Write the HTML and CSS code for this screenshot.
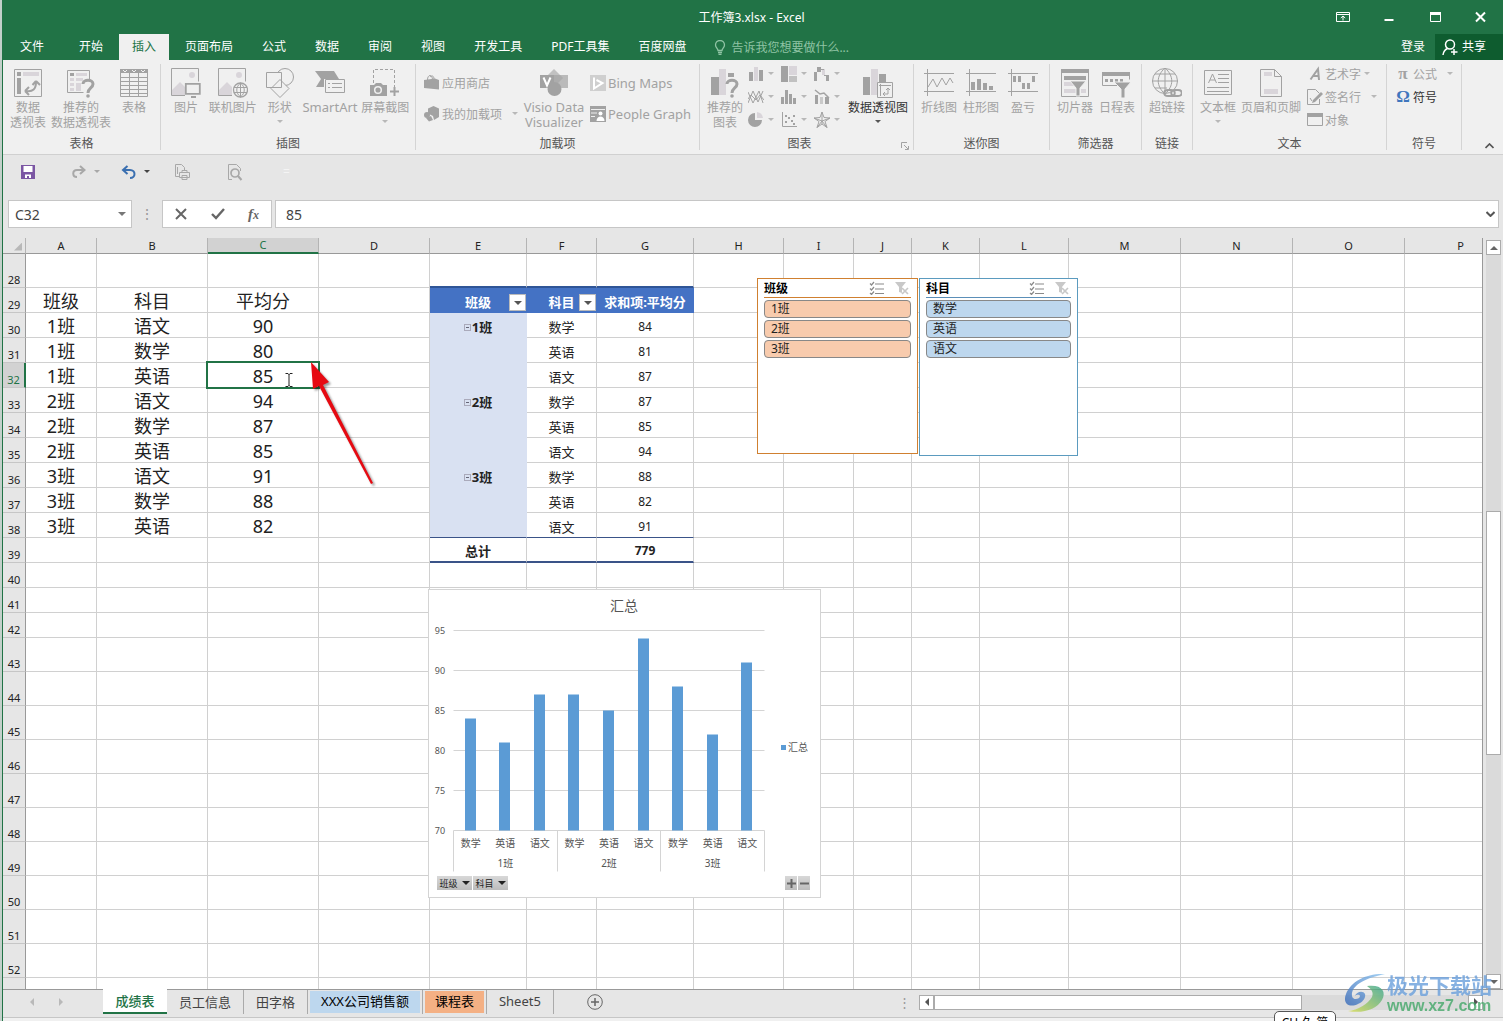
FILE: index.html
```
<!DOCTYPE html>
<html lang="zh-Hans">
<head>
  <meta charset="UTF-8">
  <meta name="viewport" content="width=device-width, initial-scale=1.0">
  <title>工作簿3.xlsx - Excel</title>
  <link rel="stylesheet" href="styles.css">
</head>
<body>
<div class="app">
  <header class="titlebar">
    <h1>工作簿3.xlsx - Excel</h1>
    <div class="window-buttons">
      <button aria-label="功能区显示选项"><svg width="14" height="12" viewBox="0 0 14 12"><path d="M.5 1.5h13v9H.5zM.5 3.5h13M7 9.500V5M4.800 7L7 5l2.200 2" fill="none" stroke="currentColor"/></svg></button>
      <button aria-label="最小化"><svg width="10" height="12" viewBox="0 0 10 12"><path d="M.5 8h9v2h-9z" fill="currentColor"/></svg></button>
      <button aria-label="最大化"><svg width="11" height="12" viewBox="0 0 11 12"><path d="M.5 1.500h10v9H.5z" fill="none" stroke="currentColor"/><path d="M0 1h11v3H0z" fill="currentColor"/></svg></button>
      <button aria-label="关闭"><svg width="11" height="12" viewBox="0 0 11 12"><path d="M1 1.500l9 9M10 1.500l-9 9" fill="none" stroke="currentColor" stroke-width="2"/></svg></button>
    </div>
  </header>

  <nav class="tabs">
    <button class="file">文件</button>
    <button>开始</button>
    <button class="active">插入</button>
    <button>页面布局</button>
    <button>公式</button>
    <button>数据</button>
    <button>审阅</button>
    <button>视图</button>
    <button>开发工具</button>
    <button>PDF工具集</button>
    <button>百度网盘</button>
    <label class="tell-me">
      <svg width="12" height="15" viewBox="0 0 12 15"><path d="M4 10.500C4 8.500 1.500 7.500 1.500 5a4.500 4.500 0 0 1 9 0C10.500 7.500 8 8.500 8 10.500zM4 12.500h4M4.500 14.300h3" fill="none" stroke="currentColor" stroke-width="1.300"/></svg>
      <input type="text" placeholder="告诉我您想要做什么...">
    </label>
    <button class="login">登录</button>
    <button class="share"><svg width="16" height="17" viewBox="0 0 16 17"><circle cx="8" cy="5.500" r="4.500" fill="none" stroke="currentColor" stroke-width="1.500"/><path d="M1 16c.5-4 2-5.500 4.500-6.500M12 10v6M9 13h6.500" fill="none" stroke="currentColor" stroke-width="1.500"/></svg>共享</button>
  </nav>

  <div class="ribbon">
    <section class="group g-table">
      <div class="items">
        <button class="big"><svg width="28" height="28" viewBox="0 0 28 28"><path class="ln" d="M.5.5h27v27H.5z"/><path class="fl" d="M3 3h4v4H3zM3 9h4v16H3z"/><path class="lt" d="M9 3h16v4H9z"/><path class="ln" stroke-width="2" d="M12 22c7 1 10-2 10-9M22 12l-3.500 4M22 12l4 4M11 22l4-4M11 22l4 4"/></svg><span>数据<br>透视表</span></button>
        <button class="big"><svg width="28" height="28" viewBox="0 0 28 28"><path class="ln" d="M22.500 10V1.500H.5v22h16"/><path class="fl" d="M3 4h4v3H3z"/><path class="lt" d="M9 4h11v3H9zM3 9h4v3H3zM3 14h4v3H3zM3 19h4v3H3zM9 9h7v3H9zM9 14h5v8H9z"/><path d="M16 15c0-5 10-5 10 0 0 4-5 4-5 9" fill="none" stroke="currentColor" stroke-width="3"/><circle cx="21" cy="27" r="1.800" class="fl"/></svg><span>推荐的<br>数据透视表</span></button>
        <button class="big"><svg width="28" height="28" viewBox="0 0 28 28"><path class="ln" d="M.5.5h27v27H.5zM9.500 4v24M18.500 4v24M0 8.500h28M0 12.500h28M0 16.500h28M0 20.500h28M0 24.500h28"/><path class="fl" d="M0 0h28v4H0z"/><path d="M3 1l2 2 2-2M12 1l2 2 2-2M21 1l2 2 2-2" stroke="#f0f0f0" fill="none"/></svg><span>表格</span></button>
      </div>
      <h2>表格</h2>
    </section>

    <section class="group g-pic">
      <div class="items">
        <button class="big"><svg width="30" height="30" viewBox="0 0 30 30"><path class="ln" d="M14 27.500H.5V.5h27v13"/><circle class="lt" cx="21" cy="7" r="3"/><path class="lt" d="M1 22l8-8 5 5v8H1z"/><path d="M14.800 15.800h14v10h-14zM20 29h5" fill="#f0f0f0" stroke="currentColor" stroke-width="1.800"/></svg><span>图片</span></button>
        <button class="big"><svg width="30" height="30" viewBox="0 0 30 30"><path class="ln" d="M14 27.500H.5V.5h27v13"/><circle class="lt" cx="21" cy="7" r="3"/><path class="lt" d="M1 22l8-8 5 5v8H1z"/><circle cx="22.500" cy="22" r="7" fill="#f0f0f0" stroke="currentColor" stroke-width="1.300"/><path class="ln" d="M22.500 15v14M16 19.500h13M16 24.500h13M22.500 15c-5 4-5 10 0 14M22.500 15c5 4 5 10 0 14"/></svg><span>联机图片</span></button>
        <button class="big caret-below"><svg width="30" height="30" viewBox="0 0 30 30"><circle class="ln" cx="20" cy="9" r="8.500"/><path d="M1.500 4.500h15v15h-15zM15 11.500l9 9-9 9-9-9z" fill="#f0f0f0" stroke="currentColor"/></svg><span>形状</span></button>
        <button class="big"><svg width="30" height="28" viewBox="0 0 30 28"><path class="fl" d="M0 2h19l5 8H9v8H1l5-8z"/><path d="M10.500 10.500h19v13h-19z" fill="#f0f0f0" stroke="currentColor"/><path class="ln" d="M13 14.500h2M17 14.500h10M13 18.500h2M17 18.500h10"/></svg><span class="latin">SmartArt</span></button>
        <button class="big caret-below"><svg width="30" height="30" viewBox="0 0 30 30"><path class="ln" stroke-dasharray="3 2" d="M3.500 15V1.500h21V19"/><path class="fl" d="M0 17h4l2-2h5l2 2h4v11H0z"/><circle cx="8" cy="22" r="3.300" fill="none" stroke="#f0f0f0" stroke-width="1.500"/><path d="M20 23.500h9M24.500 19v9" stroke="currentColor" stroke-width="2"/></svg><span>屏幕截图</span></button>
      </div>
      <h2>插图</h2>
    </section>

    <section class="group g-addin">
      <div class="items">
        <div class="stack two">
          <button class="small"><svg width="16" height="16" viewBox="0 0 16 16"><path class="fl" d="M0 5l11-1.500L15 5v9.500L0 13z"/><path class="ln" d="M3.500 5c0-6 5-6 5 0M6 2c2-2 4-1 4 2"/></svg>应用商店</button>
          <button class="small"><svg width="16" height="16" viewBox="0 0 16 16"><path class="fl" d="M9.500 0L15 2.500V11l-5 3-1-4-5-2.500V2.500z"/><circle class="fl" cx="3" cy="9" r="3"/><path class="fl" d="M2 12l5-2 2 4-4 1.500z"/></svg>我的加载项<i class="caret gap"></i></button>
        </div>
        <button class="big latin"><svg width="28" height="28" viewBox="0 0 28 28"><path class="fl" opacity=".6" d="M14 0l9 9-9 9-9-9z"/><circle class="fl" cx="14.500" cy="20" r="7"/><path class="fl" opacity=".7" d="M14 6h14v13H14z"/><path class="fl" d="M0 6h14v13H0z"/><path d="M3.500 8.500l3.500 8 3.500-8" fill="none" stroke="#fff" stroke-width="2"/></svg><span>Visio Data<br>Visualizer</span></button>
        <div class="stack two latin">
          <button class="small"><svg width="16" height="16" viewBox="0 0 16 16"><path fill="#cfcfcf" d="M0 0h16v16H0z"/><path d="M4 2.500v11L12.500 8 6.500 5" fill="none" stroke="#fff" stroke-width="2"/></svg>Bing Maps</button>
          <button class="small"><svg width="16" height="16" viewBox="0 0 16 16"><path class="fl" d="M0 0h16v16H0z"/><path d="M1 3.500h14M1 7h6M1 10.500h4" stroke="#eee"/><circle cx="10.500" cy="7.500" r="2" fill="#fff"/><path d="M6.500 15c0-6 8-6 8 0z" fill="#fff"/></svg>People Graph</button>
        </div>
      </div>
      <h2>加载项</h2>
    </section>

    <section class="group g-chart">
      <div class="items">
        <button class="big"><svg width="28" height="30" viewBox="0 0 28 30"><path class="fl" d="M0 9h8v18H0zM17 5h6v4h-6z"/><path class="lt" d="M8 1h7v26H8z"/><path d="M16 16c0-5 10-5 10 0 0 4-5 4-5 9" fill="none" stroke="currentColor" stroke-width="3"/><circle cx="21" cy="28" r="1.800" class="fl"/></svg><span>推荐的<br>图表</span></button>
        <div class="chart-types">
          <button aria-label="柱形图"><svg width="16" height="16" viewBox="0 0 16 16"><path class="fl" d="M1 6h4v9H1zM11 4h4v11h-4z"/><path class="lt" d="M6 1h4v14H6z"/></svg><i class="caret"></i></button>
          <button aria-label="树状图"><svg width="16" height="16" viewBox="0 0 16 16"><path class="fl" d="M0 0h7v16H0z"/><path class="lt" d="M8 0h8v9H8z"/><path class="fl" d="M8 10h8v6H8z" opacity=".6"/></svg><i class="caret"></i></button>
          <button aria-label="瀑布图"><svg width="16" height="16" viewBox="0 0 16 16"><path class="fl" d="M0 6h3v9H0zM3 1h4v5H3zM12 9h3v6h-3z"/><path class="lt" d="M8 3h3v6H8z"/><path class="ln" d="M7 3.500h3M10 9.500h4"/></svg><i class="caret"></i></button>
          <button aria-label="折线图"><svg width="16" height="16" viewBox="0 0 16 16"><path class="ln" d="M0 14L5 2l5 11 5-11M0 3l5 11L11 2l4 12M0 10l3-4 5 5 4-5 4 5"/></svg><i class="caret"></i></button>
          <button aria-label="直方图"><svg width="16" height="16" viewBox="0 0 16 16"><path class="fl" d="M0 8h3v7H0zM4 1h3v14H4zM8 5h3v10H8zM12 9h3v6h-3z"/></svg><i class="caret"></i></button>
          <button aria-label="组合图"><svg width="16" height="16" viewBox="0 0 16 16"><path class="fl" d="M1 6h3v9H1zM11 8h4v7h-4z"/><path class="fl" opacity=".5" d="M6 8h3v7H6z"/><path class="ln" stroke-width="1.500" d="M1 1l5 4 4-1 5 5"/></svg><i class="caret"></i></button>
          <button aria-label="饼图"><svg width="16" height="16" viewBox="0 0 16 16"><path class="fl" d="M7 8V1a7 7 0 1 0 7 7z"/><path class="lt" d="M9 6V0a7 7 0 0 1 6 6z"/></svg><i class="caret"></i></button>
          <button aria-label="散点图"><svg width="16" height="16" viewBox="0 0 16 16"><path class="ln" d="M1.500 0v14.500H16"/><path class="fl" d="M4 9h2v2H4zM7 5h2v2H7zM10 8h2v2h-2zM12 3h2v2h-2zM4 3h2v2H4zM12 11h2v2h-2z"/></svg><i class="caret"></i></button>
          <button aria-label="雷达图"><svg width="16" height="16" viewBox="0 0 16 16"><path class="ln" d="M8 0l2 5.500 6 .5-5 3.500 2 6-5-3.500-5 3.500 2-6L0 6l6-.5zM8 0v12M0 6l8 3 8-3M3 15.500L8 9l5 6.500"/></svg><i class="caret"></i></button>
        </div>
        <button class="big on caret-below"><svg width="30" height="30" viewBox="0 0 30 30"><path class="fl" d="M0 9h7v18H0zM16 6h7v8h-7z"/><path class="lt" d="M8 1h7v26H8z"/><path d="M14.500 14.500h15v15h-15z" fill="#f0f0f0" stroke="currentColor"/><path class="ln" d="M16 17.500h12M17.500 16v12M20 26h5v-6M23 22l2-2 2 2M22 24l-2 2 2 2"/></svg><span>数据透视图</span></button>
      </div>
      <h2>图表</h2>
      <button class="launcher" aria-label="图表选项"><svg width="8" height="8" viewBox="0 0 8 8"><path class="ln" d="M.5 6V.5H6M3 3l4 4M7.500 4v3.500H4"/></svg></button>
    </section>

    <section class="group g-spark">
      <div class="items">
        <button class="big"><svg width="30" height="28" viewBox="0 0 30 28"><path class="ln" d="M0 4.500h30M0 22.500h30M3.500 0v27M4 18l5-8 4 8 5-9 4 7 4-7 3 5"/></svg><span>折线图</span></button>
        <button class="big"><svg width="30" height="28" viewBox="0 0 30 28"><path class="ln" d="M0 4.500h30M0 22.500h30M3.500 0v27"/><path class="fl" d="M5 13h4v8H5zM11 10h4v11h-4zM17 14h4v7h-4zM23 17h4v4h-4z"/></svg><span>柱形图</span></button>
        <button class="big"><svg width="30" height="28" viewBox="0 0 30 28"><path class="ln" d="M0 4.500h30M0 22.500h30M3.500 0v27"/><path class="fl" d="M5 7h3v6H5zM10 7h3v6h-3zM14 14h3v6h-3zM19 14h3v6h-3zM24 7h3v6h-3z"/></svg><span>盈亏</span></button>
      </div>
      <h2>迷你图</h2>
    </section>

    <section class="group g-filter">
      <div class="items">
        <button class="big"><svg width="28" height="28" viewBox="0 0 28 28"><path class="ln" d="M.5.5h27v27H.5z"/><path class="fl" d="M0 0h28v4H0zM3 7h22v4H3z"/><path class="lt" d="M3 13h10v4H3zM3 20h12v4H3zM20 20h5v4h-5z"/><path class="fl" d="M9 12h16l-6 7v8h-4v-8z" stroke="#f0f0f0"/></svg><span>切片器</span></button>
        <button class="big"><svg width="30" height="30" viewBox="0 0 30 30"><path class="ln" d="M15 17.500H.5v-13h27v7"/><path class="fl" d="M0 4h28v4H0zM3 11h3v3H3zM8 11h3v3H8zM13 11h3v3h-3zM18 11h3v3h-3z"/><path class="fl" d="M12 14h17l-6 7v9h-4v-9z" stroke="#f0f0f0"/></svg><span>日程表</span></button>
      </div>
      <h2>筛选器</h2>
    </section>

    <section class="group g-link">
      <div class="items">
        <button class="big"><svg width="30" height="30" viewBox="0 0 30 30"><circle class="ln" cx="13" cy="13" r="12.500"/><path class="ln" d="M13 0v26M0 13h26M3 6h20M3 20h12M13 0C4 8 4 18 13 26M13 0c9 8 9 18 0 26"/><path d="M16 22h3c5 0 5 6 0 6h-3c-5 0-5-6 0-6zM23 22h3c5 0 5 6 0 6h-3c-5 0-5-6 0-6z" fill="none" stroke="currentColor" stroke-width="2"/></svg><span>超链接</span></button>
      </div>
      <h2>链接</h2>
    </section>

    <section class="group g-text">
      <div class="items">
        <button class="big caret-below"><svg width="28" height="28" viewBox="0 0 28 28"><path class="ln" d="M.5 1.500h27v24H.5zM14 5.500h11M14 9.500h11M14 13.500h11M3 18.500h22M3 22.500h22M4.500 14l4-9 4 9M6 11h5"/></svg><span>文本框</span></button>
        <button class="big"><svg width="22" height="28" viewBox="0 0 22 28"><path class="ln" d="M.5.5h14l7 7v20H.5zM14.500.5v7h7"/><path class="lt" d="M4 3h8v4H4zM4 20h14v5H4z"/></svg><span>页眉和页脚</span></button>
        <div class="stack three">
          <button class="small"><svg width="16" height="16" viewBox="0 0 16 16"><path d="M3.500 13.500L11 3l1 11M6 10h6" fill="none" stroke="currentColor" stroke-width="2"/></svg>艺术字<i class="caret"></i></button>
          <button class="small"><svg width="16" height="16" viewBox="0 0 16 16"><path class="ln" d="M12.500 10v5.500H.5V.5h8l4 4"/><path class="fl" d="M14 3l2 2-8 8-3 1 1-3z"/><path class="ln" d="M3 9l2 3"/></svg>签名行<i class="caret gap"></i></button>
          <button class="small"><svg width="16" height="16" viewBox="0 0 16 16"><path class="ln" d="M.5 1.500h15v12H.5z"/><path class="fl" d="M0 1h16v4H0z"/></svg>对象</button>
        </div>
      </div>
      <h2>文本</h2>
    </section>

    <section class="group g-symbol">
      <div class="items">
        <div class="stack three">
          <button class="small"><b class="sym">π</b>公式<i class="caret gap"></i></button>
          <button class="small on"><b class="sym omega">Ω</b>符号</button>
        </div>
      </div>
      <h2>符号</h2>
    </section>
    <button class="collapse" aria-label="折叠功能区"><svg width="9" height="6" viewBox="0 0 9 6"><path d="M.5 5l4-4 4 4" fill="none" stroke="#555" stroke-width="1.700"/></svg></button>
  </div>

  <div class="quick-access">
    <button aria-label="保存"><svg width="14" height="14" viewBox="0 0 14 14"><path d="M0 0h14v14H0z" fill="#7b56a3"/><path d="M2.500 1h9v6h-9zM4 9.500h6V13H8v-2H6v2H4z" fill="#fff"/></svg></button>
    <button class="muted" aria-label="恢复"><svg width="16" height="14" viewBox="0 0 16 14"><path d="M9 1l4.500 4L9 9M13 5H6C1 5 1 12 6 12" fill="none" stroke="currentColor" stroke-width="2"/></svg><i class="caret"></i></button>
    <button class="undo" aria-label="撤消"><svg width="16" height="14" viewBox="0 0 16 14"><path d="M6.500 1L2 5l4.500 4M2 5h7c6 0 6 8 0 8" fill="none" stroke="#3a6fb0" stroke-width="2"/></svg><i class="caret"></i></button>
    <button class="muted" aria-label="快速打印"><svg width="17" height="17" viewBox="0 0 17 17"><path class="ln" d="M5 13.500H1.500V1.500h6l3 3V7M5.500 9.500h10v5h-10zM8 9V7.500h5V9M8 12.500h5v4H8zM3.500 4v7"/></svg></button>
    <button class="muted" aria-label="打印预览"><svg width="16" height="18" viewBox="0 0 16 18"><path class="ln" d="M5 16.500H1.500V1.500h8l4 4V8"/><circle cx="8" cy="10" r="4" fill="none" stroke="currentColor" stroke-width="1.700"/><path d="M11 13l3.500 4" stroke="currentColor" stroke-width="2"/></svg></button>
    <span class="more">=</span>
  </div>

  <div class="formula-bar">
    <div class="name-box">
      <input type="text" value="C32" aria-label="名称框">
      <i class="caret"></i>
    </div>
    <span class="dots">⋮</span>
    <div class="fx">
      <button aria-label="取消"><svg width="12" height="12" viewBox="0 0 12 12"><path d="M1 1l10 10M11 1L1 11" stroke="#666" stroke-width="2"/></svg></button>
      <button aria-label="输入"><svg width="14" height="12" viewBox="0 0 14 12"><path d="M1 6l4 4 8-9" fill="none" stroke="#666" stroke-width="2.400"/></svg></button>
      <button class="fn" aria-label="插入函数"><i>f<small>x</small></i></button>
    </div>
    <div class="formula">
      <input type="text" value="85" aria-label="编辑栏">
      <svg width="9" height="6" viewBox="0 0 9 6"><path d="M.5 1l4 4 4-4" fill="none" stroke="#555" stroke-width="2"/></svg>
    </div>
  </div>

  <main class="sheet">
    <div class="canvas">
      <table class="grid" id="grid">
        <colgroup id="cols"></colgroup>
        <thead><tr id="head"></tr></thead>
        <tbody id="rows"></tbody>
      </table>

      <div class="slicer orange">
        <div class="slicer-head">
          <b>班级</b>
          <svg width="15" height="14" viewBox="0 0 15 14"><path d="M1 2.500l1.500 1.500L5 1M1 7.500L2.500 9 5 6M1 12l1.500 1.500L5 10.500M6 3h9M6 8h9M6 12.500h9" fill="none" stroke="#8a8a8a" stroke-width="1.200"/></svg>
          <svg width="14" height="14" viewBox="0 0 14 14"><path d="M0 1h11L7 6v6l-3-1V6z" fill="#c8c8c8"/><path d="M7 7l6 6M13 7l-6 6" stroke="#c8c8c8" stroke-width="1.700"/></svg>
        </div>
        <button>1班</button>
        <button>2班</button>
        <button>3班</button>
      </div>

      <div class="slicer blue">
        <div class="slicer-head">
          <b>科目</b>
          <svg width="15" height="14" viewBox="0 0 15 14"><path d="M1 2.500l1.500 1.500L5 1M1 7.500L2.500 9 5 6M1 12l1.500 1.500L5 10.500M6 3h9M6 8h9M6 12.500h9" fill="none" stroke="#8a8a8a" stroke-width="1.200"/></svg>
          <svg width="14" height="14" viewBox="0 0 14 14"><path d="M0 1h11L7 6v6l-3-1V6z" fill="#c8c8c8"/><path d="M7 7l6 6M13 7l-6 6" stroke="#c8c8c8" stroke-width="1.700"/></svg>
        </div>
        <button>数学</button>
        <button>英语</button>
        <button>语文</button>
      </div>

      <div class="chart">
        <svg id="chart" width="391" height="307" viewBox="0 0 391 307"></svg>
        <div class="chart-fields">
          <button>班级 <i class="caret"></i></button>
          <button>科目 <i class="caret"></i></button>
          <button class="zoom first" aria-label="展开整个字段"><svg width="9" height="9" viewBox="0 0 9 9"><path d="M0 4.500h9M4.500 0v9" stroke="#666" stroke-width="2"/></svg></button>
          <button class="zoom" aria-label="折叠整个字段"><svg width="9" height="9" viewBox="0 0 9 9"><path d="M0 4.500h9" stroke="#666" stroke-width="2"/></svg></button>
        </div>
      </div>

      <svg class="pointer" width="8" height="14" viewBox="0 0 8 14"><path d="M.5.5h2.500l1 1 1-1h2.500M4 1v12M.5 13.500h2.500l1-1 1 1h2.500" fill="none" stroke="#222"/></svg>
      <svg class="arrow" width="76" height="134" viewBox="0 0 76 134">
        <g class="arrow-shape"><path d="M4 1l18 20-6 3 50 98-2 1L12 25l-6 3z" fill="#e60a12"/></g>
      </svg>
    </div>
    <div class="vscroll">
      <button aria-label="向上"><i class="tri up"></i></button>
      <div class="track"><div class="thumb"></div></div>
      <button aria-label="向下"><i class="tri down"></i></button>
    </div>
  </main>

  <footer class="sheet-tabs">
    <div class="nav"><i class="tri left"></i><i class="tri right"></i></div>
    <button class="current">成绩表</button>
    <button>员工信息</button>
    <button>田字格</button>
    <button class="tint-blue"><span>XXX公司销售额</span></button>
    <button class="tint-orange"><span>课程表</span></button>
    <button>Sheet5</button>
    <button class="add" aria-label="新工作表"><svg width="16" height="16" viewBox="0 0 16 16"><circle cx="8" cy="8" r="7.300" fill="none" stroke="#666"/><path d="M4 8h8M8 4v8" stroke="#666" stroke-width="1.500"/></svg></button>
    <div class="hscroll">
      <span class="dots">⋮</span>
      <button aria-label="向左"><i class="tri left"></i></button>
      <div class="track"><div class="thumb"></div></div>
      <button aria-label="向右"><i class="tri right"></i></button>
    </div>
  </footer>
  <div class="status"></div>

  <div class="ime-tip">CH 久 简</div>
  <div class="watermark">
    <svg width="44" height="42" viewBox="0 0 44 42">
      <defs>
        <linearGradient id="wmBlue" x1="1" y1="0" x2="0" y2="1"><stop offset="0" stop-color="#8cc4f0"/><stop offset="1" stop-color="#3568b8"/></linearGradient>
        <linearGradient id="wmGreen" x1="1" y1="0" x2="0" y2="1"><stop offset="0" stop-color="#35a48c"/><stop offset="1" stop-color="#d8dc50"/></linearGradient>
      </defs>
      <path d="M42 1C24 0 8 8 3 21c-4 10 4 14 12 10 5-2 8-6 7-10-2-4-9-2-10 2 1-1 4-2 5 0 0 3-7 5-8 0C8 14 18 6 42 1z" fill="url(#wmBlue)"/>
      <path d="M24 13c14-2 20 5 15 14C34 36 20 41 5 38c10-1 20-7 24-14 2-5-1-8-5-11z" fill="url(#wmGreen)"/>
    </svg>
    <div><b>极光下载站</b><span>www.xz7.com</span></div>
  </div>
</div>
<script src="script.js"></script>
</body>
</html>
```
FILE: styles.css
```
* {
  box-sizing: border-box;
}
body {
  margin: 0;
  font-family: "Noto Sans", "Noto Sans CJK SC", sans-serif;
  font-size: 12px;
  color: #444;
  background: #e6e6e6;
  border-left: 2px solid #c3d0ca;
}
button, input {
  font: inherit;
  color: inherit;
  background: none;
  border: none;
  padding: 0;
  margin: 0;
  outline: none;
}
button {
  cursor: pointer;
  white-space: nowrap;
}
h1, h2 {
  margin: 0;
  font-size: 12px;
  font-weight: normal;
}
svg {
  display: block;
  flex: none;
}
.ln {
  fill: none;
  stroke: currentColor;
}
.fl {
  fill: currentColor;
}
.lt {
  fill: #d9d5da;
}
.app {
  position: relative;
  display: flex;
  flex-direction: column;
  height: 100vh;
  overflow: hidden;
  border-left: 1px solid #217346;
}
.caret {
  border: 3px solid transparent;
  border-top-color: currentColor;
  border-bottom: none;
}

/* title + tabs */
.titlebar {
  display: flex;
  align-items: center;
  height: 34px;
  background: #217346;
  color: #fff;
}
.titlebar h1 {
  flex: 1;
  padding-left: 180px;
  text-align: center;
}
.window-buttons {
  display: flex;
}
.window-buttons button {
  width: 46px;
  height: 30px;
  display: flex;
  align-items: center;
  justify-content: center;
}
.window-buttons button:last-child {
  width: 45px;
}
.tabs {
  display: flex;
  height: 26px;
  background: #217346;
  color: #fff;
}
.tabs button {
  padding: 0 13px;
  margin-right: 3px;
  line-height: 22px;
}
.tabs .file {
  padding: 0 17px;
  margin-right: 5px;
}
.tabs .active {
  background: #f0f0f0;
  color: #217346;
}
.tell-me {
  display: flex;
  align-items: center;
  flex: 1;
  gap: 5px;
  padding-left: 12px;
  color: #8fc3a4;
}
.tell-me input {
  width: 180px;
}
.tell-me input::placeholder {
  color: #8fc3a4;
  opacity: 1;
}
.tabs .login {
  padding: 0 7px;
}
.tabs .share {
  display: flex;
  align-items: center;
  gap: 4px;
  width: 68px;
  padding: 0 7px;
  margin: 0;
  background: #0e5c2f;
}

/* ribbon */
.ribbon {
  display: flex;
  position: relative;
  flex: none;
  height: 95px;
  padding: 4px 0 4px;
  background: #f0f0f0;
  border-bottom: 1px solid #d0d0d0;
  color: #a2a2a2;
}
.group {
  position: relative;
  display: flex;
  flex-direction: column;
  flex: none;
  border-right: 1px solid #d4d4d4;
}
.group h2 {
  height: 20px;
  line-height: 20px;
  margin-bottom: -4px;
  text-align: center;
  color: #555;
}
.items {
  display: flex;
  flex: 1;
  padding: 0 4px;
}
.g-table { width: 158px; }
.g-pic { width: 255px; }
.g-addin { width: 284px; }
.g-chart { width: 214px; }
.g-spark { width: 136px; }
.g-filter { width: 92px; }
.g-link { width: 51px; }
.g-text { width: 194px; }
.g-symbol { width: 75px; }
.g-chart h2 {
  padding-right: 14px;
}
.big {
  position: relative;
  display: flex;
  flex-direction: column;
  align-items: center;
  min-width: 42px;
  padding: 4px 2px 0;
  line-height: 15px;
}
.big svg {
  height: 32px;
  padding-bottom: 2px;
}
.big.on span, .small.on {
  color: #333;
}
.caret-below::after {
  content: "";
  margin-top: 5px;
  border: 3px solid transparent;
  border-top-color: #b8b8b8;
  border-bottom: none;
}
.caret-below.on::after {
  border-top-color: #555;
}
.latin {
  font-size: 13px;
}
.stack {
  display: flex;
  flex-direction: column;
  align-items: flex-start;
  padding: 0 4px;
}
.small {
  display: flex;
  align-items: center;
  gap: 2px;
  height: 23px;
}
.two .small {
  height: 31px;
}
.two {
  padding-top: 3px;
}
.three, .chart-types {
  margin-top: -2px;
}
.small .caret, .chart-types .caret {
  border-top-color: #b8b8b8;
}
.small .caret {
  margin-left: 1px;
}
.small .caret.gap {
  margin-left: 8px;
}
.sym {
  width: 16px;
  font: bold 17px "Liberation Serif", serif;
}
.omega {
  color: #3f76bd;
}
.chart-types {
  display: grid;
  grid-template-columns: repeat(3, 33px);
  grid-auto-rows: 23px;
  padding-left: 2px;
}
.chart-types button {
  display: flex;
  align-items: center;
  gap: 4px;
}
.launcher {
  position: absolute;
  right: 4px;
  bottom: 0;
}
.collapse {
  position: absolute;
  right: 9px;
  bottom: 5px;
}

/* quick access */
.quick-access {
  display: flex;
  align-items: center;
  height: 35px;
  padding: 0 0 2px 18px;
  gap: 36px;
}
.quick-access button {
  display: flex;
  align-items: center;
  gap: 7px;
}
.quick-access .undo {
  margin-left: -15px;
  margin-right: -12px;
}
.muted {
  color: #a8a8a8;
}
.more {
  padding-left: 4px;
  color: #f4f4f4;
}

/* formula bar */
.formula-bar {
  display: flex;
  height: 48px;
  padding: 10px 4px 10px 5px;
  font-size: 14px;
}
.name-box, .fx, .formula {
  display: flex;
  align-items: center;
  background: #fff;
  border: 1px solid #c6c6c6;
}
.name-box {
  width: 124px;
  padding: 0 5px 0 6px;
  justify-content: space-between;
}
.name-box input {
  width: 80px;
}
.name-box .caret {
  border-width: 4px;
  border-bottom: none;
  border-top-color: #777;
}
.dots {
  width: 30px;
  text-align: center;
  line-height: 28px;
  color: #999;
}
.fx {
  width: 110px;
  justify-content: space-between;
  padding: 0 12px;
}
.fn {
  font: bold 15px "Liberation Serif", serif;
  color: #666;
}
.fn small {
  font-size: 12px;
}
.formula {
  flex: 1;
  margin-left: 3px;
  padding: 0 3px 0 10px;
}
.formula input {
  flex: 1;
}

/* sheet */
.sheet {
  flex: 1;
  min-height: 0;
  display: flex;
  border-bottom: 1px solid #999;
}
.canvas {
  position: relative;
  flex: 1;
  min-width: 0;
  overflow: hidden;
  background: #fff;
  border-right: 1px solid #999;
}
.grid {
  table-layout: fixed;
  width: 1514px;
  border-spacing: 0;
  color: #222;
}
.grid th, .grid td {
  padding: 0;
  height: 25px;
  line-height: 20px;
  overflow: hidden;
  white-space: nowrap;
  text-align: center;
  border-right: 1px solid #d0d0d0;
  border-bottom: 1px solid #d0d0d0;
}
.grid th {
  height: 16px;
  line-height: 14px;
  font-size: 11px;
  font-weight: normal;
  background: #e6e6e6;
  border-color: #b4b4b4;
}
.grid thead th {
  border-bottom-color: #999;
}
.grid tbody th {
  vertical-align: bottom;
  border-right-color: #999;
  border-bottom-color: #c6c6c6;
}
.grid tr.tall td {
  height: 34px;
}
.grid th.picked {
  background: #d2d2d2;
  color: #217346;
}
.grid thead th.picked {
  border-bottom: 2px solid #217346;
}
.grid tbody th.picked {
  border-right: 2px solid #217346;
}
.corner::after {
  content: "";
  display: block;
  margin: 2px 3px 0 auto;
  width: 8px;
  height: 8px;
  background: #b8b8b8;
  clip-path: polygon(100% 0, 100% 100%, 0 100%);
}
.grid td.src {
  padding-top: 2px;
  font-size: 18px;
}
.grid td.pv {
  padding-top: 4px;
  font-size: 13px;
}
.grid td.num {
  font-size: 12px;
}
.grid td.cur {
  position: relative;
  overflow: visible;
}
.cur::after {
  content: "";
  position: absolute;
  inset: -2px;
  border: 2px solid #217346;
}
.grid td.pv-head {
  position: relative;
  color: #fff;
  font-weight: bold;
  background: #4472c4;
  border-color: #4472c4;
}
.grid td.pv-top {
  border-bottom: 2px solid #2f5597;
}
.grid td.pv-side {
  font-weight: bold;
  background: #d9e1f2;
  border-color: #d9e1f2;
}
.grid td.pv-end {
  border-bottom-color: #3a5388;
}
.grid td.pv-total {
  padding-top: 3px;
  font-weight: bold;
  border-bottom: 2px solid #3a5388;
}
.pv-filter {
  position: absolute;
  right: 0;
  bottom: 1px;
  width: 17px;
  height: 17px;
  display: flex;
  align-items: center;
  justify-content: center;
  background: #fff;
  border: 1px solid #bbb;
  color: #555;
}
.pv-filter .caret {
  border-width: 4px;
  border-bottom: none;
}
.fold {
  display: inline-block;
  width: 7px;
  height: 7px;
  margin-right: 1px;
  border: 1px solid #aab;
  vertical-align: 1px;
}
.pv-side {
  padding-right: 8px;
}
.fold::after {
  content: "";
  display: block;
  margin: 2px 1px;
  height: 1px;
  background: #667;
}

/* objects floating over the cells */
.slicer {
  position: absolute;
  top: 40px;
  padding: 0 6px;
  background: #fff;
  color: #222;
}
.orange {
  left: 754px;
  width: 161px;
  height: 176px;
  border: 1px solid #d08030;
}
.blue {
  left: 916px;
  width: 159px;
  height: 178px;
  border: 1px solid #5b9bbf;
}
.slicer-head {
  display: flex;
  align-items: center;
  gap: 11px;
  height: 19px;
  margin-bottom: 2px;
  padding-right: 2px;
  border-bottom: 1px solid #d08030;
}
.blue .slicer-head {
  border-color: #5b8fb8;
}
.slicer-head b {
  flex: 1;
  color: #000;
}
.slicer button {
  display: block;
  width: 100%;
  height: 18px;
  margin-bottom: 2px;
  padding-left: 6px;
  line-height: 16px;
  text-align: left;
  border: 1px solid #888;
  border-radius: 4px;
}
.orange button {
  background: #f8cbad;
}
.blue button {
  background: #bdd7ee;
}
.chart {
  position: absolute;
  left: 425px;
  top: 351px;
  width: 393px;
  background: #fff;
  border: 1px solid #d4d4d4;
}
.chart text {
  fill: #555;
  font-size: 10px;
  text-anchor: middle;
}
.chart .val {
  font-size: 9px;
}
.chart .title {
  font-size: 14px;
}
.chart-fields {
  position: absolute;
  left: 8px;
  right: 10px;
  bottom: 7px;
  display: flex;
  gap: 1px;
}
.chart-fields button {
  display: flex;
  align-items: center;
  justify-content: center;
  gap: 4px;
  width: 35px;
  height: 14px;
  font-size: 9px;
  color: #222;
  background: linear-gradient(#d8d8d8, #bcbcbc);
}
.chart-fields .zoom {
  width: 12px;
}
.chart-fields .first {
  margin-left: auto;
}
.chart-fields .caret {
  border-width: 4px;
  border-bottom: none;
}
.pointer {
  position: absolute;
  left: 282px;
  top: 135px;
}
.arrow {
  position: absolute;
  left: 304px;
  top: 123px;
}
.arrow-shape {
  filter: drop-shadow(2px 2px 1px rgba(0, 0, 0, 0.4));
}

/* scrollbars */
.tri {
  border: 4px solid transparent;
}
.tri.up { border-bottom-color: #666; border-top: none; }
.tri.down { border-top-color: #666; border-bottom: none; }
.tri.left { border-right-color: #555; border-left: none; }
.tri.right { border-left-color: #555; border-right: none; }
.vscroll {
  display: flex;
  flex-direction: column;
  width: 20px;
  padding: 2px 2px 0 3px;
}
.vscroll button, .hscroll button {
  display: flex;
  align-items: center;
  justify-content: center;
  flex: none;
  width: 15px;
  height: 15px;
  background: #fff;
  border: 1px solid #ababab;
}
.track {
  display: flex;
  flex: 1;
  background: #dadada;
}
.thumb {
  background: #fff;
  border: 1px solid #ababab;
}
.vscroll .thumb {
  width: 15px;
  height: 34%;
  margin-top: 256px;
}

/* sheet tabs */
.sheet-tabs {
  display: flex;
  height: 27px;
  padding-bottom: 3px;
  font-size: 13px;
}
.sheet-tabs .nav {
  display: flex;
  align-items: center;
  gap: 25px;
  width: 100px;
  padding-left: 27px;
  opacity: 0.3;
}
.sheet-tabs > button {
  padding: 0 12px 2px;
  border-right: 1px solid #aaa;
}
.sheet-tabs .current {
  width: 64px;
  padding: 0;
  margin-top: -1px;
  background: #fff;
  color: #217346;
  font-weight: 500;
  border-right: none;
  border-bottom: 2px solid #217346;
}
.sheet-tabs .tint-blue, .sheet-tabs .tint-orange {
  padding: 0 2px;
  color: #000;
}
.sheet-tabs span {
  display: block;
}
.sheet-tabs button span {
  line-height: 20px;
  padding: 0 11px 2px;
}
.tint-blue span {
  background: #bdd7ee;
}
.tint-orange span {
  background: #f4b084;
}
.sheet-tabs .tint-orange span {
  padding: 0 10px 2px;
}
.sheet-tabs .add {
  padding: 0 33px;
  border: none;
}
.hscroll {
  display: flex;
  align-items: center;
  width: 614px;
  margin-left: auto;
  padding-right: 20px;
}
.hscroll .track {
  height: 15px;
}
.hscroll .thumb {
  width: 69%;
}
.status {
  height: 4px;
  background: #f0f0f0;
  border-top: 1px solid #c6c6c6;
}
.ime-tip {
  position: absolute;
  right: 167px;
  bottom: -13px;
  width: 62px;
  height: 23px;
  line-height: 22px;
  text-align: center;
  color: #000;
  background: #fff;
  border: 1px solid #555;
  border-radius: 5px;
}
.watermark {
  position: absolute;
  right: 10px;
  bottom: 6px;
  display: flex;
  align-items: center;
  opacity: 0.8;
}
.watermark div {
  display: flex;
  flex-direction: column;
  width: 106px;
}
.watermark b {
  font-size: 21px;
  line-height: 24px;
  color: #6a9fdc;
  white-space: nowrap;
}
.watermark span {
  font: bold 16px/18px "Liberation Sans", sans-serif;
  color: #45a86a;
}
```
FILE: script.js
```
const cols = [
  ['A', 71], ['B', 111], ['C', 111], ['D', 111], ['E', 97], ['F', 70], ['G', 97], ['H', 90],
  ['I', 70], ['J', 58], ['K', 68], ['L', 89], ['M', 112], ['N', 112], ['O', 112], ['P', 112]
];

// 源数据 29-38 行
const source = [
  ['班级', '科目', '平均分'],
  ['1班', '语文', 90], ['1班', '数学', 80], ['1班', '英语', 85],
  ['2班', '语文', 94], ['2班', '数学', 87], ['2班', '英语', 85],
  ['3班', '语文', 91], ['3班', '数学', 88], ['3班', '英语', 82]
];

// 透视表明细 30-38 行
const pivot = [
  ['数学', 84], ['英语', 81], ['语文', 87],
  ['数学', 87], ['英语', 85], ['语文', 94],
  ['数学', 88], ['英语', 82], ['语文', 91]
];

function cell(row, col) {
  const cls = [];
  let text = '';
  if (row >= 29 && row <= 38 && col < 3) {
    cls.push('src');
    text = source[row - 29][col];
    if (row === 32 && col === 2) cls.push('cur');
  }
  if (col >= 4 && col <= 6 && row >= 28 && row <= 39) {
    const i = row - 30;
    cls.push('pv');
    if (row === 28) {
      cls.push('pv-top');
    } else if (row === 29) {
      cls.push('pv-head');
      text = ['班级', '科目', '求和项:平均分'][col - 4];
      if (col < 6) text += '<button class="pv-filter" aria-label="筛选"><i class="caret"></i></button>';
    } else if (row === 39) {
      cls.push('pv-total');
      if (col === 6) cls.push('num');
      text = ['总计', '', 779][col - 4];
    } else {
      if (col === 4) {
        cls.push('pv-side');
        if (i % 3 === 0) text = `<i class="fold"></i>${i / 3 + 1}班`;
      } else {
        text = pivot[i][col - 5];
        if (col === 6) cls.push('num');
      }
      if (row === 38) cls.push('pv-end');
    }
  }
  return `<td class="${cls.join(' ')}">${text}</td>`;
}

function buildGrid() {
  document.getElementById('cols').innerHTML =
    '<col style="width:23px">' + cols.map(c => `<col style="width:${c[1]}px">`).join('');
  document.getElementById('head').innerHTML =
    '<th class="corner"></th>' + cols.map(c => `<th class="${c[0] === 'C' ? 'picked' : ''}">${c[0]}</th>`).join('');
  let html = '';
  for (let r = 28; r <= 52; r++) {
    const tall = r === 28 || r > 42;
    html += `<tr class="${tall ? 'tall' : ''}"><th class="${r === 32 ? 'picked' : ''}">${r}</th>`;
    html += cols.map((c, i) => cell(r, i)).join('') + '</tr>';
  }
  // 底部露出的半行，不带行号
  html += '<tr class="tall"><th></th>' + cols.map(() => '<td></td>').join('') + '</tr>';
  document.getElementById('rows').innerHTML = html;
}

function buildChart() {
  const left = 24.5, right = 335.5, base = 240.5, step = (right - left) / 9;
  let s = '<text class="title" x="195" y="21">汇总</text>';
  for (let v = 70; v <= 95; v += 5) {
    const y = base - (v - 70) * 8;
    s += `<path d="M${left} ${y}H${right}" stroke="#d4d4d4"/><text class="val" x="11" y="${y + 3}">${v}</text>`;
  }
  pivot.forEach((p, i) => {
    const x = left + step * (i + 0.5);
    const h = (p[1] - 70) * 8;
    s += `<rect x="${Math.floor(x - 5.5)}" y="${base - h}" width="11" height="${h}" fill="#5b9bd5"/>`;
    s += `<text x="${x}" y="257">${p[0]}</text>`;
  });
  for (let g = 0; g <= 3; g++) {
    const x = Math.floor(left + step * 3 * g) + 0.5;
    s += `<path d="M${x} ${base}v41" stroke="#d4d4d4"/>`;
    if (g < 3) s += `<text x="${left + step * (3 * g + 1.5)}" y="277">${g + 1}班</text>`;
  }
  s += '<rect x="352" y="155" width="5" height="5" fill="#5b9bd5"/><text x="369" y="161">汇总</text>';
  document.getElementById('chart').innerHTML = s;
}

buildGrid();
buildChart();
```
